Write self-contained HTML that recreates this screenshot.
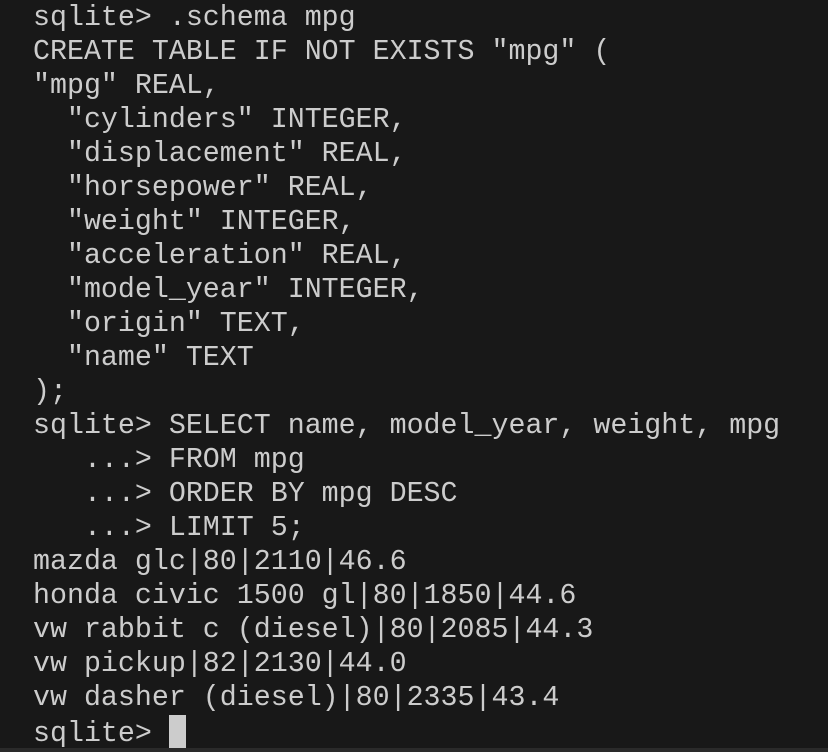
<!DOCTYPE html>
<html><head><meta charset="utf-8"><style>
html,body{margin:0;padding:0;background:#181818;width:828px;height:752px;overflow:hidden}
pre{margin:0;position:absolute;left:33px;top:1px;font-family:"Liberation Mono",monospace;font-size:28.3px;line-height:34px;color:#cccccc;letter-spacing:0}
.cur{display:inline-block;width:17px;height:33px;background:#cccccc;vertical-align:-7px}
.bar{position:absolute;left:0;top:748px;width:828px;height:4px;background:#2a2a2a}
</style></head><body>
<pre>sqlite&gt; .schema mpg
CREATE TABLE IF NOT EXISTS "mpg" (
"mpg" REAL,
  "cylinders" INTEGER,
  "displacement" REAL,
  "horsepower" REAL,
  "weight" INTEGER,
  "acceleration" REAL,
  "model_year" INTEGER,
  "origin" TEXT,
  "name" TEXT
);
sqlite&gt; SELECT name, model_year, weight, mpg
   ...&gt; FROM mpg
   ...&gt; ORDER BY mpg DESC
   ...&gt; LIMIT 5;
mazda glc|80|2110|46.6
honda civic 1500 gl|80|1850|44.6
vw rabbit c (diesel)|80|2085|44.3
vw pickup|82|2130|44.0
vw dasher (diesel)|80|2335|43.4
sqlite&gt; <span class="cur"></span></pre>
<div class="bar"></div>
</body></html>
